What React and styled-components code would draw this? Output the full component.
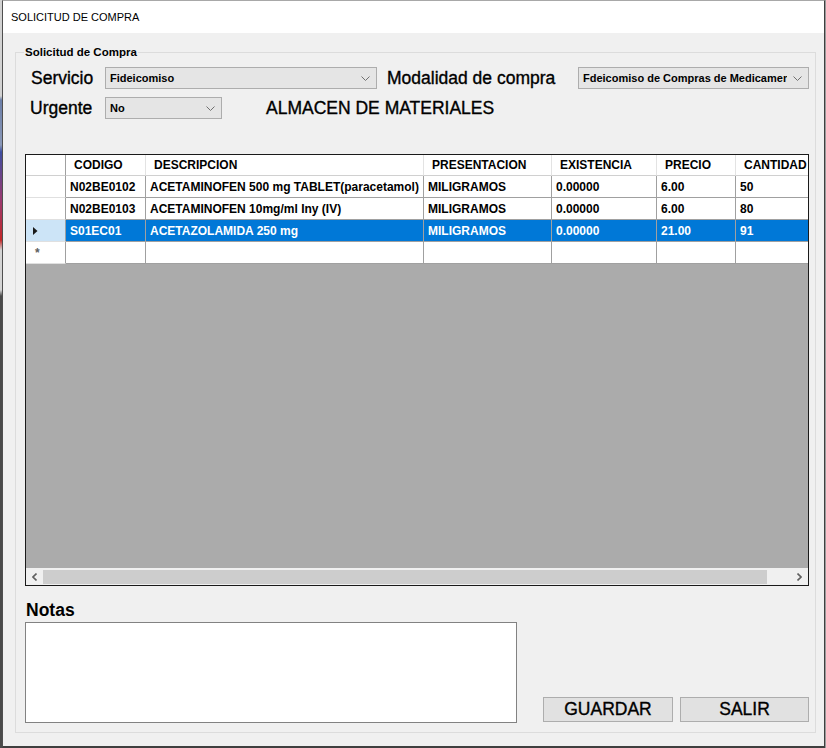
import React from 'react';
import styled, { createGlobalStyle } from 'styled-components';

const GlobalStyle = createGlobalStyle`
  html, body {
    margin: 0;
    padding: 0;
  }
  body {
    font-family: "Liberation Sans", Arial, sans-serif;
    background: #c8c8c8;
  }
  * {
    box-sizing: border-box;
  }
`;

const Page = styled.div`
  display: flex;
  width: 826px;
  height: 748px;
  background: #9a9a9a;
`;

const Peek = styled.div`
  width: 2px;
  flex: none;
  background: linear-gradient(
    to bottom,
    #d2d2d2 0,
    #d2d2d2 96px,
    #6c7fa8 100px,
    #8a98b8 145px,
    #3e4ea0 152px,
    #9a3a70 200px,
    #c42828 240px,
    #d4d4d4 250px,
    #d4d4d4 290px,
    #4a4a4a 296px,
    #4a4a4a 100%
  );
`;

const Window = styled.div`
  width: 823px;
  height: 748px;
  flex: none;
  display: flex;
  flex-direction: column;
  background: #f0f0f0;
  border-top: 1px solid #a8a8a8;
  border-left: 1px solid #4f4f4f;
  border-right: 1px solid #3f3f3f;
  border-bottom: 2px solid #3f3f3f;
`;

const TitleBar = styled.div`
  height: 32px;
  flex: none;
  display: flex;
  align-items: center;
  padding-left: 8px;
  background: #fff;
  font-size: 11px;
  color: #000;
`;

const Body = styled.div`
  flex: 1;
  padding: 12px 8px 13px 12px;
`;

const Group = styled.fieldset`
  margin: 0;
  padding: 0;
  min-width: 0;
  height: 100%;
  border: 1px solid #dcdcdc;
`;

const Legend = styled.legend`
  margin-left: 8px;
  padding: 0 1px;
  font-size: 11.5px;
  font-weight: bold;
  line-height: 14px;
  color: #000;
`;

const Content = styled.div`
  display: flex;
  flex-direction: column;
  padding: 8px 6px 9px 9px;
`;

const FormRow = styled.div`
  display: flex;
  align-items: center;
  height: 22px;
  padding-left: ${p => p.$indent}px;
  margin-top: ${p => p.$top || 0}px;
`;

const Label = styled.div`
  width: ${p => (p.$w ? `${p.$w}px` : 'auto')};
  margin-left: ${p => p.$ml || 0}px;
  flex: none;
  font-size: 17.5px;
  color: #000;
  white-space: nowrap;
  -webkit-text-stroke: 0.35px #000;
`;

const Combo = styled.div`
  width: ${p => p.$w}px;
  height: 22px;
  flex: none;
  display: flex;
  align-items: center;
  gap: 6px;
  padding: 0 6px 0 4px;
  background: #e5e5e5;
  border: 1px solid #adadad;
  font-size: 11px;
  font-weight: bold;
  color: #000;
`;

const ComboText = styled.span`
  flex: 1;
  overflow: hidden;
  white-space: nowrap;
`;

const Chevron = () => (
  <svg width="9" height="5" viewBox="0 0 9 5">
    <polyline points="0.5,0.5 4.5,4.5 8.5,0.5" fill="none" stroke="#707070" strokeWidth="1" />
  </svg>
);

const ComboBox = ({ w, children }) => (
  <Combo $w={w}>
    <ComboText>{children}</ComboText>
    <Chevron />
  </Combo>
);

const Grid = styled.div`
  margin-top: 35px;
  height: 432px;
  flex: none;
  display: flex;
  flex-direction: column;
  overflow: hidden;
  background: #ababab;
  border: 1px solid #1a1a1a;
`;

const GridRow = styled.div`
  display: grid;
  grid-template-columns: 40px 80px 278px 128px 105px 79px 90px;
  height: ${p => (p.$header ? 21 : 22)}px;
  flex: none;
`;

const Cell = styled.div`
  display: flex;
  align-items: center;
  padding-left: ${p => (p.$header ? 8 : 4)}px;
  border-right: 1px solid ${p => (p.$header ? '#e3e3e3' : '#a0a0a0')};
  border-bottom: 1px solid ${p => (p.$header ? '#d0d0d0' : '#a0a0a0')};
  background: ${p => (p.$selected ? '#0078d7' : '#fff')};
  color: ${p => (p.$selected ? '#fff' : '#000')};
  font-size: 12px;
  font-weight: bold;
  white-space: nowrap;
  overflow: hidden;
`;

const RowHead = styled.div`
  display: flex;
  align-items: center;
  padding-left: ${p => (p.$star ? 9 : 7)}px;
  border-right: 1px solid #a0a0a0;
  border-bottom: 1px solid ${p => (p.$header ? '#d0d0d0' : '#e0e0e0')};
  background: ${p => (p.$selected ? '#cce4f7' : '#fff')};
  font-size: 12px;
  font-weight: bold;
  color: #606060;
`;

const Arrow = () => (
  <svg width="5" height="8" viewBox="0 0 5 8">
    <polygon points="0,0 4.5,4 0,8" fill="#1a1a1a" />
  </svg>
);

const GrayArea = styled.div`
  flex: 1;
`;

const HScroll = styled.div`
  height: 17px;
  flex: none;
  display: flex;
  align-items: stretch;
  background: #f0f0f0;
`;

const ScrollBtn = styled.div`
  width: 17px;
  flex: none;
  display: flex;
  align-items: center;
  justify-content: center;
`;

const Thumb = styled.div`
  width: 724px;
  flex: none;
  margin: 2px 0 1px;
  background: #cdcdcd;
`;

const Track = styled.div`
  flex: 1;
`;

const ScrollChevron = ({ dir }) => (
  <svg width="5" height="8" viewBox="0 0 5 8">
    <polyline
      points={dir === 'left' ? '4.5,0.5 1,4 4.5,7.5' : '0.5,0.5 4,4 0.5,7.5'}
      fill="none"
      stroke="#606060"
      strokeWidth="1.6"
    />
  </svg>
);

const Bottom = styled.div`
  display: flex;
  align-items: flex-end;
  margin-top: 14px;
`;

const NotesCol = styled.div`
  width: 492px;
  flex: none;
  display: flex;
  flex-direction: column;
  gap: 2px;
`;

const NotesLabel = styled.div`
  height: 20px;
  line-height: 20px;
  padding-left: 1px;
  font-size: 17.5px;
  font-weight: bold;
  color: #000;
`;

const NotesBox = styled.textarea`
  height: 101px;
  margin: 0;
  resize: none;
  background: #fff;
  border: 1px solid #828282;
  outline: none;
`;

const Buttons = styled.div`
  display: flex;
  gap: 7px;
  margin-left: 26px;
  margin-bottom: 1px;
`;

const Button = styled.button`
  width: ${p => p.$w}px;
  height: 25px;
  padding: 0;
  background: #e1e1e1;
  border: 1px solid #adadad;
  font-family: "Liberation Sans", Arial, sans-serif;
  font-size: 17.5px;
  color: #000;
  -webkit-text-stroke: 0.35px #000;
`;

const headers = ['CODIGO', 'DESCRIPCION', 'PRESENTACION', 'EXISTENCIA', 'PRECIO', 'CANTIDAD'];

const rows = [
  ['N02BE0102', 'ACETAMINOFEN 500 mg TABLET(paracetamol)', 'MILIGRAMOS', '0.00000', '6.00', '50'],
  ['N02BE0103', 'ACETAMINOFEN 10mg/ml Iny (IV)', 'MILIGRAMOS', '0.00000', '6.00', '80'],
  ['S01EC01', 'ACETAZOLAMIDA 250 mg', 'MILIGRAMOS', '0.00000', '21.00', '91'],
];

export default function App() {
  return (
    <>
      <GlobalStyle />
      <Page>
        <Peek />
        <Window>
          <TitleBar>SOLICITUD DE COMPRA</TitleBar>
          <Body>
            <Group>
              <Legend>Solicitud de Compra</Legend>
              <Content>
                <FormRow $indent={6}>
                  <Label $w={74}>Servicio</Label>
                  <ComboBox w={272}>Fideicomiso</ComboBox>
                  <Label $w={191} $ml={10}>Modalidad de compra</Label>
                  <ComboBox w={231}>Fdeicomiso de Compras de Medicamentos</ComboBox>
                </FormRow>
                <FormRow $indent={5} $top={8}>
                  <Label $w={75}>Urgente</Label>
                  <ComboBox w={117}>No</ComboBox>
                  <Label $ml={44}>ALMACEN DE MATERIALES</Label>
                </FormRow>

                <Grid>
                  <GridRow $header>
                    <RowHead $header />
                    {headers.map(h => (
                      <Cell key={h} $header>{h}</Cell>
                    ))}
                  </GridRow>
                  {rows.map((r, i) => {
                    const sel = i === 2;
                    return (
                      <GridRow key={r[0]}>
                        <RowHead $selected={sel}>{sel && <Arrow />}</RowHead>
                        {r.map((v, j) => (
                          <Cell key={j} $selected={sel}>{v}</Cell>
                        ))}
                      </GridRow>
                    );
                  })}
                  <GridRow>
                    <RowHead $star>*</RowHead>
                    {headers.map(h => (
                      <Cell key={h} />
                    ))}
                  </GridRow>
                  <GrayArea />
                  <HScroll>
                    <ScrollBtn><ScrollChevron dir="left" /></ScrollBtn>
                    <Thumb />
                    <Track />
                    <ScrollBtn><ScrollChevron dir="right" /></ScrollBtn>
                  </HScroll>
                </Grid>

                <Bottom>
                  <NotesCol>
                    <NotesLabel>Notas</NotesLabel>
                    <NotesBox />
                  </NotesCol>
                  <Buttons>
                    <Button $w={130}>GUARDAR</Button>
                    <Button $w={129}>SALIR</Button>
                  </Buttons>
                </Bottom>
              </Content>
            </Group>
          </Body>
        </Window>
      </Page>
    </>
  );
}
